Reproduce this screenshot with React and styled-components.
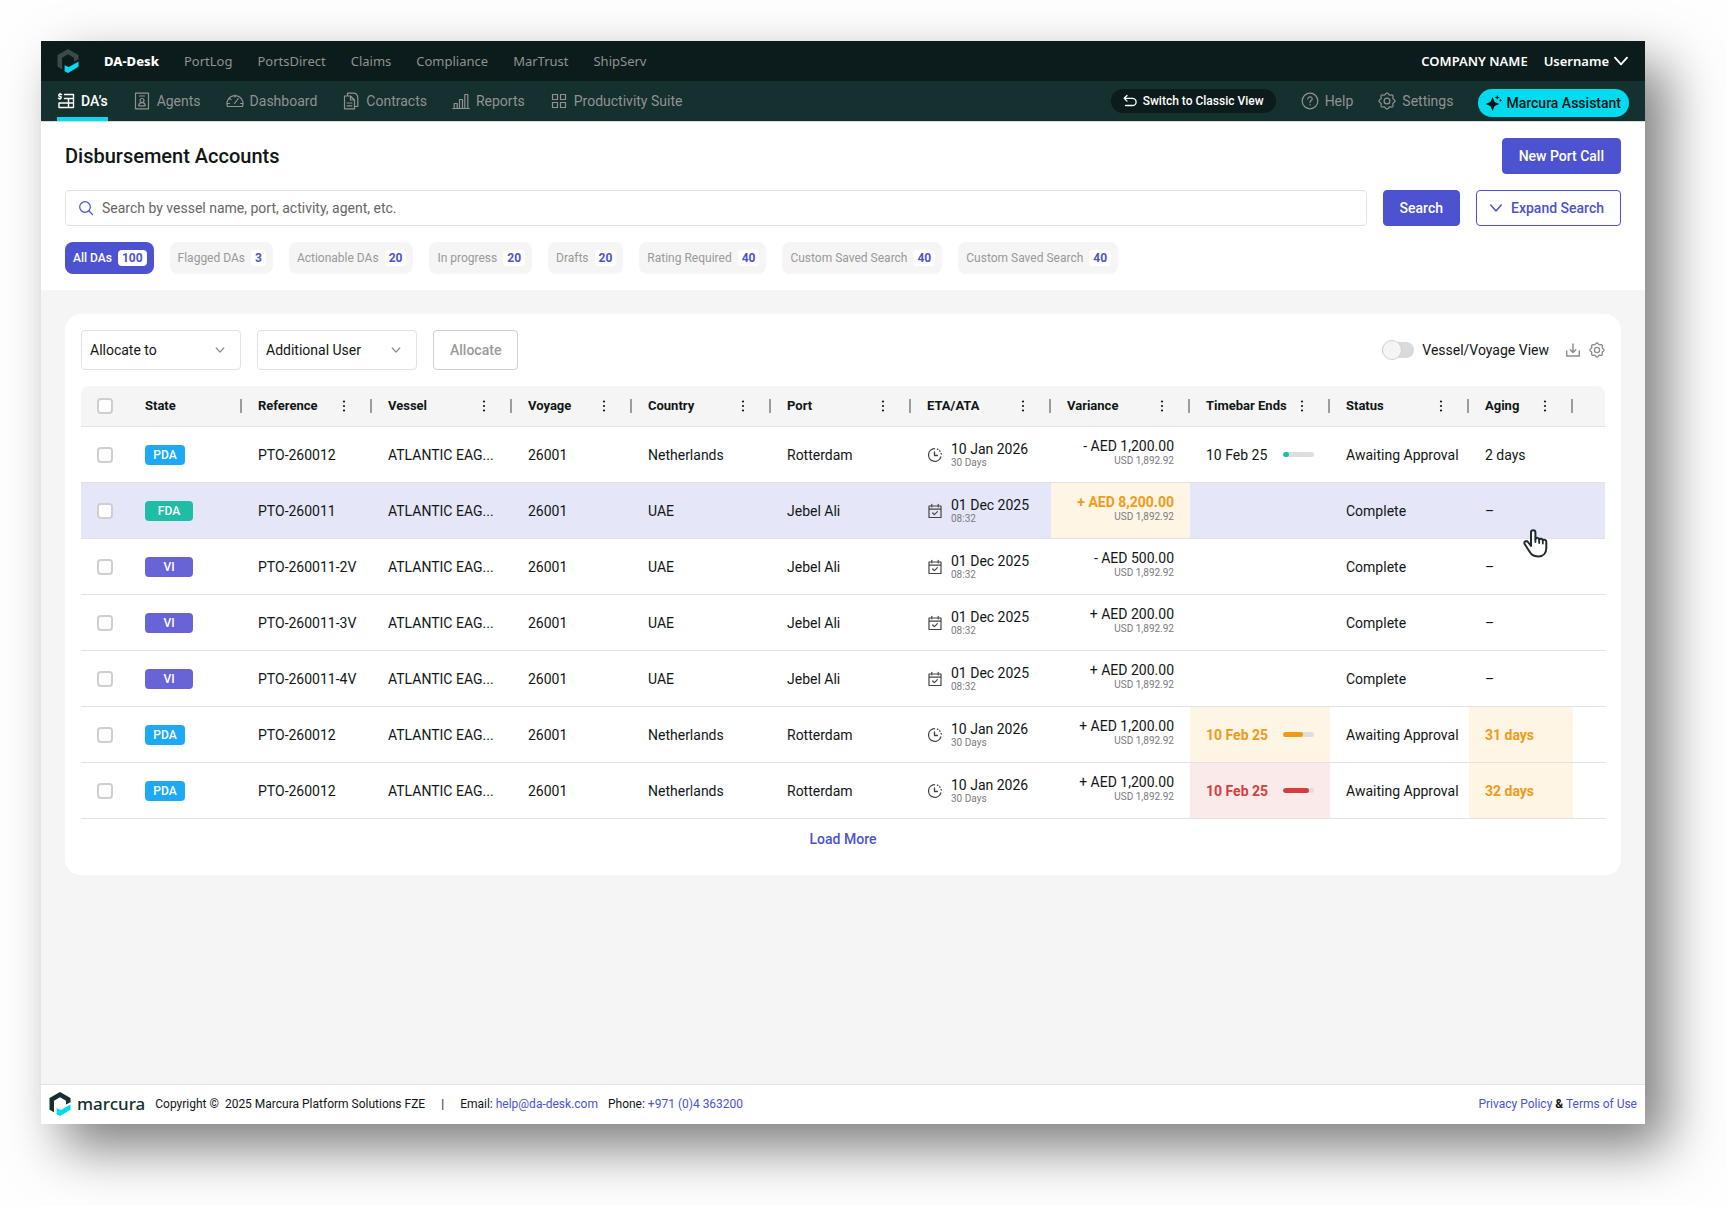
import React from "react";
import styled, { createGlobalStyle, css } from "styled-components";

const color = {
  ink: "#111616",
  muted: "#929292",
  line: "#e2e2e2",
  surface: "#f5f5f5",
  indigo: "#4c52d0",
  cyan: "#00dbf0",
  night: "#0c1b1b",
  pine: "#14302f",
  amber: "#ee9b18",
  amberBg: "#fff5e4",
  red: "#d33f3f",
  redBg: "#fbeaea",
};

const GlobalStyle = createGlobalStyle`
  *, *::before, *::after { box-sizing: border-box; }
  body {
    margin: 0;
    background: #fefefe;
    color: ${color.ink};
    font-family: Roboto, "Liberation Sans", sans-serif;
    font-size: 14px;
    line-height: 20px;
  }
  button, input, select { font: inherit; }
  button { cursor: pointer; }
  a { color: inherit; text-decoration: none; }
  svg { display: block; flex: none; }
`;

const Page = styled.div`
  display: flex;
  min-height: 100vh;
  padding: 41px 82px 82px 41px;
`;

const Window = styled.div`
  flex: 1;
  min-width: 0;
  display: flex;
  flex-direction: column;
  background: ${color.surface};
  box-shadow: 22px 24px 50px rgba(0, 0, 0, 0.5);
`;

/* ---------- top bars ---------- */

const TopBar = styled.header`
  display: flex;
  align-items: center;
  justify-content: space-between;
  height: 40px;
  padding: 0 16px;
  background: ${color.night};
  font-family: "Noto Sans", sans-serif;
  font-size: 13px;
`;

const Products = styled.nav`
  display: flex;
  align-items: center;
  gap: 25px;
`;

const ProductLink = styled.a`
  color: ${(p) => (p.$active ? "#fff" : color.muted)};
  font-weight: ${(p) => (p.$active ? 800 : 400)};
`;

const Account = styled.div`
  display: flex;
  align-items: center;
  gap: 16px;
  color: #fff;
  font-weight: 600;
`;

const UserButton = styled.button`
  display: flex;
  align-items: center;
  gap: 4px;
  padding: 0;
  border: 0;
  background: none;
  color: inherit;
`;

const SubBar = styled.div`
  display: flex;
  justify-content: space-between;
  height: 41px;
  padding: 0 16px;
  border-bottom: 1px solid #d6dad9;
  background: ${color.pine};
`;

const Sections = styled.nav`
  display: flex;
  gap: 25px;
`;

const SectionLink = styled.a`
  display: flex;
  align-items: center;
  gap: 6px;
  border-top: 4px solid transparent;
  border-bottom: 4px solid ${(p) => (p.$active ? color.cyan : "transparent")};
  color: ${(p) => (p.$active ? "#fff" : color.muted)};
  font-weight: ${(p) => (p.$active ? 500 : 400)};
`;

const Tools = styled.div`
  display: flex;
  align-items: flex-start;
  gap: 25px;
  padding-top: 8px;
`;

const ToolButton = styled.button`
  display: flex;
  align-items: center;
  gap: 6px;
  height: 24px;
  padding: 0;
  border: 0;
  background: none;
  color: ${color.muted};
`;

const ClassicButton = styled(ToolButton)`
  padding: 0 12px;
  border-radius: 12px;
  background: ${color.night};
  color: #fff;
  font-size: 12px;
  font-weight: 500;
`;

const AssistantButton = styled(ToolButton)`
  gap: 4px;
  height: 28px;
  padding: 0 8px;
  border-radius: 14px;
  background: ${color.cyan};
  color: #061414;
  font-weight: 500;
`;

/* ---------- page head ---------- */

const Head = styled.section`
  display: flex;
  flex-direction: column;
  gap: 16px;
  padding: 16px 24px;
  background: #fff;
`;

const HeadRow = styled.div`
  display: flex;
  align-items: center;
  gap: 16px;
`;

const Title = styled.h1`
  flex: 1;
  margin: 0;
  font-size: 20px;
  line-height: 24px;
  font-weight: 500;
`;

const Button = styled.button`
  display: flex;
  align-items: center;
  justify-content: center;
  gap: 8px;
  height: ${(p) => (p.$tall ? 40 : 36)}px;
  padding: 0 16px;
  border: 1px solid ${color.indigo};
  border-radius: 4px;
  background: ${color.indigo};
  color: #fff;
  font-weight: 500;
  white-space: nowrap;
  ${(p) =>
    p.$outline &&
    css`
      padding-left: 12px;
      background: #fff;
      color: ${color.indigo};
    `}
  &:disabled {
    border-color: #cfcfcf;
    background: #fff;
    color: #9a9a9a;
    cursor: default;
  }
`;

const SearchBox = styled.label`
  flex: 1;
  display: flex;
  align-items: center;
  gap: 8px;
  height: 36px;
  padding: 0 12px;
  border: 1px solid ${color.line};
  border-radius: 4px;
  color: ${color.indigo};
`;

const SearchInput = styled.input`
  flex: 1;
  min-width: 0;
  padding: 0;
  border: 0;
  outline: 0;
  background: none;
  color: ${color.ink};
  &::placeholder { color: #666; opacity: 1; }
`;

const Chips = styled.div`
  display: flex;
  flex-wrap: wrap;
  gap: 16px;
`;

const Count = styled.span`
  padding: 0 4px;
  border-radius: 4px;
  background: #fff;
  color: ${color.indigo};
  font-weight: 700;
  line-height: 16px;
`;

const Chip = styled.button`
  display: flex;
  align-items: center;
  gap: 6px;
  height: 32px;
  padding: 0 7px 0 8px;
  border: 0;
  border-radius: 8px;
  background: ${(p) => (p.$active ? color.indigo : color.surface)};
  color: ${(p) => (p.$active ? "#fff" : "#999")};
  font-size: 12px;
  font-weight: ${(p) => (p.$active ? 500 : 400)};
`;

/* ---------- card ---------- */

const Main = styled.main`
  flex: 1;
  padding: 24px;
`;

const Card = styled.section`
  padding: 16px;
  border-radius: 16px;
  background: #fff;
`;

const Toolbar = styled.div`
  display: flex;
  align-items: center;
  gap: 16px;
  margin-bottom: 16px;
`;

const SelectWrap = styled.div`
  display: grid;
  width: 160px;
  align-items: center;
  & > * { grid-area: 1 / 1; }
  & > svg {
    justify-self: end;
    margin-right: 16px;
    color: #888;
    pointer-events: none;
  }
`;

const Select = styled.select`
  width: 100%;
  height: 40px;
  padding: 0 8px;
  border: 1px solid ${color.line};
  border-radius: 4px;
  appearance: none;
  background: #fff;
  color: ${color.ink};
`;

const ViewTools = styled.div`
  display: flex;
  align-items: center;
  gap: 8px;
  margin-left: auto;
`;

const SwitchLabel = styled.label`
  display: flex;
  align-items: center;
  gap: 8px;
  margin-right: 8px;
`;

const Switch = styled.input`
  display: flex;
  align-items: center;
  width: 32px;
  height: 16px;
  margin: 0;
  border-radius: 8px;
  appearance: none;
  background: #dadada;
  &::before {
    content: "";
    width: 20px;
    height: 20px;
    flex: none;
    border: 1px solid #d0d0d0;
    border-radius: 50%;
    background: #f5f5f5;
  }
  &:checked { justify-content: flex-end; background: ${color.indigo}; }
`;

const IconButton = styled.button`
  padding: 0;
  border: 0;
  background: none;
  color: #8c8c8c;
`;

const Table = styled.table`
  width: 100%;
  border-collapse: separate;
  border-spacing: 0;
  table-layout: fixed;
`;

const Th = styled.th`
  height: 41px;
  padding: 0 0 0 16px;
  border-bottom: 1px solid ${color.line};
  background: ${color.surface};
  font-weight: 700;
  font-size: 13px;
  text-align: left;
  white-space: nowrap;
  &:first-child { border-top-left-radius: 8px; }
  &:last-child { border-top-right-radius: 8px; }
`;

const ThInner = styled.div`
  display: flex;
  align-items: center;
  justify-content: space-between;
`;

const ThTools = styled.div`
  display: flex;
  align-items: center;
  gap: 18px;
`;

const Divider = styled.span`
  width: 2px;
  height: 14px;
  background: #9c9c9c;
`;

const Tr = styled.tr`
  background: ${(p) => (p.$active ? "#e5e6f8" : "#fff")};
`;

const tones = {
  amber: css`
    background: ${color.amberBg};
    color: ${color.amber};
    font-weight: 700;
  `,
  red: css`
    background: ${color.redBg};
    color: ${color.red};
    font-weight: 700;
  `,
};

const Td = styled.td`
  height: 56px;
  padding: 0 ${(p) => (p.$wide ? 0 : 16)}px 0 16px;
  border-bottom: 1px solid ${color.line};
  white-space: nowrap;
  ${(p) => tones[p.$tone]}
`;

const Checkbox = styled.input`
  display: block;
  width: 16px;
  height: 16px;
  margin: 0;
  border: 2px solid #cfcfcf;
  border-radius: 4px;
  appearance: none;
  background: #fff;
  &:checked { border-color: ${color.indigo}; background: ${color.indigo}; }
`;

const stateColor = { PDA: "#1fa9f4", FDA: "#20bda6", VI: "#6963d8" };

const StateBadge = styled.span`
  display: block;
  width: ${(p) => (p.$state === "PDA" ? 40 : 48)}px;
  border-radius: 4px;
  background: ${(p) => stateColor[p.$state]};
  color: #fff;
  font-size: 12px;
  font-weight: 500;
  line-height: 20px;
  text-align: center;
`;

const DateCell = styled.div`
  display: flex;
  align-items: center;
  gap: 8px;
  & > svg { color: #444; }
`;

const Stack = styled.div`
  display: flex;
  flex-direction: column;
  line-height: 16px;
`;

const AmountStack = styled(Stack)`
  gap: 1px;
  padding-bottom: 4px;
  text-align: right;
`;

const Small = styled.span`
  color: #7b7b80;
  font-size: 10px;
  font-weight: 400;
  line-height: 12px;
`;

const TimebarCell = styled.div`
  display: flex;
  align-items: center;
  justify-content: space-between;
`;

const Meter = styled.span`
  width: 31px;
  height: 5px;
  overflow: hidden;
  border-radius: 3px;
  background: #dedede;
`;

const meterColor = { amber: color.amber, red: color.red };

const MeterFill = styled.span`
  display: block;
  height: 100%;
  border-radius: 3px;
  background: ${(p) => meterColor[p.$tone] || "#20bda6"};
`;

const LoadMore = styled.button`
  display: block;
  height: 40px;
  margin: 0 auto;
  padding: 0 16px;
  border: 0;
  background: none;
  color: ${color.indigo};
  font-weight: 500;
`;

/* ---------- footer ---------- */

const Footer = styled.footer`
  display: flex;
  align-items: center;
  justify-content: space-between;
  height: 40px;
  padding: 0 8px 2px;
  border-top: 1px solid ${color.line};
  background: #fff;
  font-size: 12px;
  a { color: ${color.indigo}; }
`;

const FooterInfo = styled.div`
  display: flex;
  align-items: center;
  gap: 10px;
`;

const Brand = styled.div`
  display: flex;
  align-items: center;
  gap: 6px;
  color: ${color.pine};
  font-family: "Noto Sans", sans-serif;
  font-size: 17px;
  font-weight: 500;
  line-height: 20px;
`;

const Pipe = styled.span`
  padding: 0 6px;
`;

const Pointer = styled.svg`
  position: absolute;
  left: 1520px;
  top: 528px;
`;

/* ---------- icons ---------- */

const Icon = ({ size = 18, box = 18, width = 1.2, children, ...rest }) => (
  <svg
    width={size}
    height={size}
    viewBox={`0 0 ${box} ${box}`}
    fill="none"
    stroke="currentColor"
    strokeWidth={width}
    strokeLinecap="round"
    strokeLinejoin="round"
    aria-hidden="true"
    {...rest}
  >
    {children}
  </svg>
);

const Logo = ({ tint }) => (
  <svg width="22" height="24" viewBox="0 0 22 24" aria-hidden="true">
    <path fill={tint} d="M11 0 21.5 6v4.200L17 12.500V8.700L11 5.200 5 8.700V20.300L.5 17.800V6z" />
    <path fill={color.cyan} d="M7.600 16.200l4.200 1.800L21.500 12.500v5.300L11 24l-3.400-1.800z" />
  </svg>
);

const Chevron = ({ size = 12, width = 1.6 }) => (
  <Icon size={size} box={12} width={width}>
    <path d="M1.500 3.500 6 8.500l4.500-5" />
  </Icon>
);

/* Eight rounded teeth around a circle, sampled in polar coordinates. */
const gearPath =
  Array.from({ length: 96 }, (_, i) => {
    const angle = (i / 96) * Math.PI * 2;
    const radius = 7.2 + 0.8 * Math.cos(angle * 8);
    const x = (9 + radius * Math.cos(angle)).toFixed(2);
    const y = (9 + radius * Math.sin(angle)).toFixed(2);
    return `${i ? "L" : "M"}${x} ${y}`;
  }).join("") + "z";

const GearIcon = (props) => (
  <Icon {...props}>
    <path d={gearPath} />
    <circle cx="9" cy="9" r="2.900" />
  </Icon>
);

const sectionIcons = {
  das: (
    <Icon width={1.4}>
      <path d="M4.500 2.500c-2.800-.8-3.800 1.400-1.500 1.900 2.200.5 1.500 2.700-1.500 1.900M3 1.500v.8M3 6.600v.8" />
      <path d="M7.500 2.500h9v13H2M2 11h14.500M7.500 6.500h9M11.500 6.500v9M2 15.500V11" />
    </Icon>
  ),
  agents: (
    <Icon>
      <path d="M2.500 1.200h13v15.600h-13zM6.500 4h5" />
      <circle cx="9" cy="8.500" r="2" />
      <path d="M5.800 13.800c0-4.200 6.400-4.200 6.400 0z" />
    </Icon>
  ),
  dashboard: (
    <Icon>
      <path d="M1.500 14.500a8 8 0 1 1 15 0zM8.500 11.500l3.800-5M9 3v2M3.500 6.500l1.500 1M1.500 11.500h2M14.500 11.500h2" />
    </Icon>
  ),
  contracts: (
    <Icon>
      <path d="M5.500 3.500V1.200h5.500c3 0 4.800 2 4.800 5v8.300h-2.500M2.500 4h6l4 4v8.800h-10zM8.500 4v4h4M5 11h5M5 13.800h5" />
    </Icon>
  ),
  reports: (
    <Icon>
      <path d="M.8 16.500h16.400M2.200 16.500v-5h3v5M7.500 16.500V7.500h3v9M12.800 16.500v-14h3v14" />
    </Icon>
  ),
  suite: (
    <Icon>
      <path d="M2.500 2.500h5v5h-5zM10.500 2.500h5v5h-5zM2.500 10.500h5v5h-5zM10.500 10.500h5v5h-5z" />
    </Icon>
  ),
};

const ClockIcon = () => (
  <Icon size={16} box={16} width={1.3}>
    <path d="M7.500 1.700A6.300 6.300 0 1 0 13.800 10" />
    <path d="M10.300 2.200A6.300 6.300 0 0 1 14.300 7.500" strokeDasharray=".6 2.300" />
    <path d="M7.500 5V8.500h3" />
  </Icon>
);

const CalendarIcon = () => (
  <Icon size={16} box={16} width={1.2}>
    <path d="M2 3h12v11.500H2zM2 6.200h12M4.800 1.300v2.500M11.200 1.300v2.500M5.700 10l1.700 1.700 3-3" />
  </Icon>
);

const DotsIcon = () => (
  <svg width="16" height="16" viewBox="0 0 16 16" fill={color.ink} aria-hidden="true">
    <circle cx="8" cy="3.500" r="1.100" />
    <circle cx="8" cy="8" r="1.100" />
    <circle cx="8" cy="12.500" r="1.100" />
  </svg>
);

/* ---------- data ---------- */

const products = ["DA-Desk", "PortLog", "PortsDirect", "Claims", "Compliance", "MarTrust", "ShipServ"];

const sections = [
  ["das", "DA’s"],
  ["agents", "Agents"],
  ["dashboard", "Dashboard"],
  ["contracts", "Contracts"],
  ["reports", "Reports"],
  ["suite", "Productivity Suite"],
];

const chips = [
  ["All DAs", 100],
  ["Flagged DAs", 3],
  ["Actionable DAs", 20],
  ["In progress", 20],
  ["Drafts", 20],
  ["Rating Required", 40],
  ["Custom Saved Search", 40],
  ["Custom Saved Search", 40],
];

const columns = [
  ["State", 113],
  ["Reference", 130],
  ["Vessel", 140],
  ["Voyage", 120],
  ["Country", 139],
  ["Port", 140],
  ["ETA/ATA", 140],
  ["Variance", 139],
  ["Timebar Ends", 140],
  ["Status", 139],
  ["Aging", 104],
];

const netherlands = {
  state: "PDA",
  reference: "PTO-260012",
  country: "Netherlands",
  port: "Rotterdam",
  date: "10 Jan 2026",
  note: "30 Days",
  status: "Awaiting Approval",
};

const uae = {
  state: "VI",
  country: "UAE",
  port: "Jebel Ali",
  date: "01 Dec 2025",
  note: "08:32",
  status: "Complete",
  aging: "–",
};

const rows = [
  { ...netherlands, variance: "- AED 1,200.00", timebar: 18, aging: "2 days" },
  { ...uae, state: "FDA", reference: "PTO-260011", variance: "+ AED 8,200.00", varianceTone: "amber", active: true },
  { ...uae, reference: "PTO-260011-2V", variance: "- AED 500.00" },
  { ...uae, reference: "PTO-260011-3V", variance: "+ AED 200.00" },
  { ...uae, reference: "PTO-260011-4V", variance: "+ AED 200.00" },
  { ...netherlands, variance: "+ AED 1,200.00", timebar: 66, timebarTone: "amber", aging: "31 days", agingTone: "amber" },
  { ...netherlands, variance: "+ AED 1,200.00", timebar: 84, timebarTone: "red", aging: "32 days", agingTone: "amber" },
];

/* ---------- parts ---------- */

const Dropdown = ({ label }) => (
  <SelectWrap>
    <Select aria-label={label} defaultValue={label}>
      <option>{label}</option>
    </Select>
    <Chevron size={10} />
  </SelectWrap>
);

const Row = ({ row }) => (
  <Tr $active={row.active}>
    <Td>
      <Checkbox type="checkbox" aria-label={`Select ${row.reference}`} />
    </Td>
    <Td>
      <StateBadge $state={row.state}>{row.state}</StateBadge>
    </Td>
    <Td $wide>{row.reference}</Td>
    <Td>ATLANTIC EAG...</Td>
    <Td>26001</Td>
    <Td>{row.country}</Td>
    <Td>{row.port}</Td>
    <Td>
      <DateCell>
        {row.state === "PDA" ? <ClockIcon /> : <CalendarIcon />}
        <Stack>
          {row.date}
          <Small>{row.note}</Small>
        </Stack>
      </DateCell>
    </Td>
    <Td $tone={row.varianceTone}>
      <AmountStack>
        {row.variance}
        <Small>USD 1,892.92</Small>
      </AmountStack>
    </Td>
    <Td $tone={row.timebarTone}>
      {row.timebar && (
        <TimebarCell>
          10 Feb 25
          <Meter>
            <MeterFill $tone={row.timebarTone} style={{ width: `${row.timebar}%` }} />
          </Meter>
        </TimebarCell>
      )}
    </Td>
    <Td $wide>{row.status}</Td>
    <Td $tone={row.agingTone}>{row.aging}</Td>
    <Td />
  </Tr>
);

export default function App() {
  return (
    <>
      <GlobalStyle />
      <Page>
        <Window>
          <TopBar>
            <Products>
              <Logo tint="#3d4a4a" />
              {products.map((name, i) => (
                <ProductLink key={name} href="#" $active={i === 0}>
                  {name}
                </ProductLink>
              ))}
            </Products>
            <Account>
              <span>COMPANY NAME</span>
              <UserButton>
                Username
                <Chevron size={16} width={1.4} />
              </UserButton>
            </Account>
          </TopBar>

          <SubBar>
            <Sections>
              {sections.map(([icon, name], i) => (
                <SectionLink key={name} href="#" $active={i === 0}>
                  {sectionIcons[icon]}
                  {name}
                </SectionLink>
              ))}
            </Sections>
            <Tools>
              <ClassicButton>
                <Icon size={14} box={14} width={1.3}>
                  <path d="M4 1.500 1.200 4.300 4 7.100M1.500 4.300H9.500a3.600 3.600 0 0 1 0 7.200H2.500" />
                </Icon>
                Switch to Classic View
              </ClassicButton>
              <ToolButton>
                <Icon>
                  <circle cx="9" cy="9" r="7.800" />
                  <path d="M6.800 7c0-3 4.600-2.800 4.400 0-.1 1.600-2.200 1.600-2.200 3.400M9 12.700v.3" />
                </Icon>
                Help
              </ToolButton>
              <ToolButton>
                <GearIcon />
                Settings
              </ToolButton>
              <AssistantButton>
                <svg width="16" height="16" viewBox="0 0 16 16" fill="currentColor" aria-hidden="true">
                  <path d="M6.500 2 8.600 6.900 13.500 9 8.600 11.100 6.500 16 4.400 11.100-.5 9l4.900-2.100zM11.300 0l.7 1.800 1.800.7-1.800.7-.7 1.800-.7-1.800-1.800-.7 1.800-.7zM14.500 3.500l.5 1.200 1.200.5-1.200.5-.5 1.200-.5-1.200-1.200-.5 1.200-.5z" />
                </svg>
                Marcura Assistant
              </AssistantButton>
            </Tools>
          </SubBar>

          <Head>
            <HeadRow>
              <Title>Disbursement Accounts</Title>
              <Button>New Port Call</Button>
            </HeadRow>
            <HeadRow>
              <SearchBox>
                <Icon size={16} box={16} width={1.2}>
                  <circle cx="7" cy="7" r="5.300" />
                  <path d="m11 11 3.500 3.500" />
                </Icon>
                <SearchInput
                  aria-label="Search disbursement accounts"
                  placeholder="Search by vessel name, port, activity, agent, etc."
                />
              </SearchBox>
              <Button>Search</Button>
              <Button $outline>
                <Chevron size={14} width={1.3} />
                Expand Search
              </Button>
            </HeadRow>
            <Chips>
              {chips.map(([name, count], i) => (
                <Chip key={i} $active={i === 0}>
                  {name}
                  <Count>{count}</Count>
                </Chip>
              ))}
            </Chips>
          </Head>

          <Main>
            <Card>
              <Toolbar>
                <Dropdown label="Allocate to" />
                <Dropdown label="Additional User" />
                <Button $tall disabled>
                  Allocate
                </Button>
                <ViewTools>
                  <SwitchLabel>
                    <Switch type="checkbox" role="switch" />
                    Vessel/Voyage View
                  </SwitchLabel>
                  <IconButton aria-label="Download">
                    <Icon size={16} box={16} width={1.4}>
                      <path d="M1.700 9v5h12.600V9M8 2v8.500M5.200 7.800 8 10.500l2.800-2.700" />
                    </Icon>
                  </IconButton>
                  <IconButton aria-label="Table settings">
                    <GearIcon size={16} width={1.500} />
                  </IconButton>
                </ViewTools>
              </Toolbar>

              <Table>
                <colgroup>
                  <col width="48" />
                  {columns.map(([name, width]) => (
                    <col key={name} width={width} />
                  ))}
                  <col />
                </colgroup>
                <thead>
                  <tr>
                    <Th>
                      <Checkbox type="checkbox" aria-label="Select all" />
                    </Th>
                    {columns.map(([name], i) => (
                      <Th key={name} scope="col">
                        <ThInner>
                          {name}
                          <ThTools>
                            {i > 0 && <DotsIcon />}
                            <Divider />
                          </ThTools>
                        </ThInner>
                      </Th>
                    ))}
                    <Th />
                  </tr>
                </thead>
                <tbody>
                  {rows.map((row, i) => (
                    <Row key={i} row={row} />
                  ))}
                </tbody>
              </Table>
              <LoadMore>Load More</LoadMore>
            </Card>
          </Main>

          <Footer>
            <FooterInfo>
              <Brand>
                <Logo tint={color.pine} />
                marcura
              </Brand>
              <span>Copyright ©&nbsp; 2025 Marcura Platform Solutions FZE</span>
              <Pipe>|</Pipe>
              <span>
                Email: <a href="mailto:help@da-desk.com">help@da-desk.com</a>
              </span>
              <span>
                Phone: <a href="tel:+9714363200">+971 (0)4 363200</a>
              </span>
            </FooterInfo>
            <span>
              <a href="#">Privacy Policy</a> <b>&amp;</b> <a href="#">Terms of Use</a>
            </span>
          </Footer>
        </Window>
      </Page>
      <Pointer width="30" height="30" viewBox="0 0 30 30" aria-hidden="true">
        <path
          d="M11 18V4.500a2.200 2.200 0 0 1 4.400 0V11a2 2 0 0 1 3.800 .6 2 2 0 0 1 3.600 .8 2 2 0 0 1 3.500 1.400V20c0 5-3 8.500-8 8.500-5.500 0-7.200-2.200-9.500-6l-4.300-6.700c-.8-3 2.500-3.500 3.900-1.300z"
          fill="#fff"
          stroke="#222b2b"
          strokeWidth="2"
          strokeLinejoin="round"
        />
        <path d="M15.400 11v3M19.200 12v3M22.800 13v2.500" stroke="#222b2b" strokeWidth="1.800" strokeLinecap="round" />
      </Pointer>
    </>
  );
}
